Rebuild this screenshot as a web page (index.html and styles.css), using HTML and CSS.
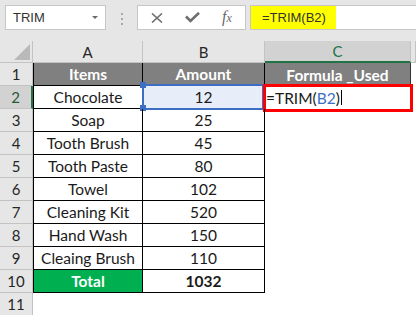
FILE: index.html
```html
<!DOCTYPE html>
<html lang="en">
<head>
    <meta charset="UTF-8" />
    <title>TRIM - Excel</title>
    <link rel="stylesheet" href="styles.css">
</head>
<body>
    <div class="toolbar">
        <div class="name-box"><span>TRIM</span><span class="caret"></span></div>
        <div class="grip"><i></i><i></i><i></i></div>
        <div class="fx-buttons">
            <svg width="12" height="10" viewBox="0 0 12 10"><path d="M1 0.5 L11 9.5 M11 0.5 L1 9.5" stroke="#6e6e6e" stroke-width="1.6" fill="none"/></svg>
            <svg width="15" height="11" viewBox="0 0 15 11"><path d="M1 4.5 L5.5 9 L14 0.8" stroke="#6e6e6e" stroke-width="2.6" fill="none"/></svg>
            <span class="fx">f<small>x</small></span>
        </div>
        <div class="formula-bar"><span class="formula-hl">=TRIM(B2)</span></div>
    </div>

    <div class="sheet">
        <div class="head corner"><svg width="16" height="16" viewBox="0 0 16 16"><path d="M16 0 L16 16 L0 16 Z" fill="#b9b9b9"/></svg></div>
        <div class="head">A</div>
        <div class="head">B</div>
        <div class="head active-col">C</div>
        <div class="head"></div>

        <div class="head">1</div>
        <div class="cell t first hdr">Items</div>
        <div class="cell t hdr">Amount</div>
        <div class="cell hdr c1">Formula _Used</div>
        <div class="cell"></div>

        <div class="head active-row">2</div>
        <div class="cell t first">Chocolate</div>
        <div class="cell t ref">12
            <span class="ref-box"></span>
            <span class="handle top"></span>
            <span class="handle bottom"></span>
        </div>
        <div class="cell edit">=TRIM(<span class="ref-text">B2</span>)<span class="cursor"></span>
            <span class="mark"></span>
        </div>
        <div class="cell"></div>

        <div class="head">3</div>
        <div class="cell t first">Soap</div>
        <div class="cell t">25</div>
        <div class="cell"></div>
        <div class="cell"></div>

        <div class="head">4</div>
        <div class="cell t first">Tooth Brush</div>
        <div class="cell t">45</div>
        <div class="cell"></div>
        <div class="cell"></div>

        <div class="head">5</div>
        <div class="cell t first">Tooth Paste</div>
        <div class="cell t">80</div>
        <div class="cell"></div>
        <div class="cell"></div>

        <div class="head">6</div>
        <div class="cell t first">Towel</div>
        <div class="cell t">102</div>
        <div class="cell"></div>
        <div class="cell"></div>

        <div class="head">7</div>
        <div class="cell t first">Cleaning Kit</div>
        <div class="cell t">520</div>
        <div class="cell"></div>
        <div class="cell"></div>

        <div class="head">8</div>
        <div class="cell t first">Hand Wash</div>
        <div class="cell t">150</div>
        <div class="cell"></div>
        <div class="cell"></div>

        <div class="head">9</div>
        <div class="cell t first">Cleaing Brush</div>
        <div class="cell t">110</div>
        <div class="cell"></div>
        <div class="cell"></div>

        <div class="head">10</div>
        <div class="cell t first total">Total</div>
        <div class="cell t bold">1032</div>
        <div class="cell"></div>
        <div class="cell"></div>

        <div class="head">11</div>
        <div class="cell"></div>
        <div class="cell"></div>
        <div class="cell"></div>
        <div class="cell"></div>
    </div>
</body>
</html>
```

FILE: styles.css
```css
body {
    margin: 0;
    background: #fff;
    font-family: "Lato", "Liberation Sans", sans-serif;
    color: #1a1a1a;
    overflow: hidden;
}

/* formula bar */
.toolbar {
    display: flex;
    align-items: flex-start;
    height: 41px;
    padding: 5px 0 0 5px;
    box-sizing: border-box;
    background: #e6e6e6;
}
.name-box {
    width: 101px;
    height: 25px;
    box-sizing: border-box;
    background: #fff;
    border: 1px solid #c6c6c6;
    display: flex;
    align-items: center;
    justify-content: space-between;
    padding: 0 7px;
    font: 13px "Liberation Sans", sans-serif;
    color: #333;
}
.caret {
    border-left: 3px solid transparent;
    border-right: 3px solid transparent;
    border-top: 3px solid #6a6a6a;
}
.grip {
    margin: 8px 0 0 15px;
    display: flex;
    flex-direction: column;
    gap: 3px;
}
.grip i {
    width: 2px;
    height: 2px;
    background: #a8a8a8;
}
.fx-buttons {
    margin-left: 14px;
    width: 109px;
    height: 25px;
    box-sizing: border-box;
    background: #fff;
    border: 1px solid #c6c6c6;
    display: flex;
    align-items: center;
    padding-left: 13px;
    gap: 22px;
}
.fx {
    font: italic 16px "Liberation Serif", serif;
    color: #6a6a6a;
    margin-top: -2px;
}
.fx small {
    font-size: 12px;
}
.formula-bar {
    margin-left: 4px;
    flex: 1;
    height: 25px;
    box-sizing: border-box;
    background: #fff;
    border: 1px solid #c6c6c6;
    border-right: none;
    display: flex;
}
.formula-hl {
    display: flex;
    align-items: center;
    background: #ffff00;
    padding: 0 10px 0 11px;
    font: 13px "Liberation Sans", sans-serif;
    color: #333;
}

/* grid */
.sheet {
    display: grid;
    grid-template-columns: 33px 110px 122px 146px 1fr;
    grid-template-rows: 22px;
    grid-auto-rows: 23px;
}
.head {
    box-sizing: border-box;
    background: #e6e6e6;
    border-right: 1px solid #c3c3c3;
    border-bottom: 1px solid #c3c3c3;
    display: flex;
    align-items: center;
    justify-content: center;
    font-size: 15px;
    color: #262626;
}
.corner {
    justify-content: flex-end;
    align-items: flex-end;
    padding: 0 2px 2px 0;
}
.active-col {
    background: #d2d2d2;
    border-bottom: 2px solid #217346;
    color: #217346;
}
.active-row {
    background: #d2d2d2;
    border-right: 2px solid #217346;
    color: #1d5c39;
}
.cell {
    box-sizing: border-box;
    display: flex;
    align-items: center;
    justify-content: center;
    font-size: 15.5px;
    position: relative;
}
.t {
    border-right: 1px solid #000;
    border-bottom: 1px solid #000;
}
.first {
    border-left: 1px solid #000;
}
.hdr {
    background: #808080;
    color: #fff;
    font-weight: bold;
}
.c1 {
    border-right: 1px solid #333;
}
.total {
    background: #00b050;
    color: #fff;
    font-weight: bold;
}
.bold {
    font-weight: bold;
}

/* reference highlight on B2 */
.ref {
    background: #e7eef9;
}
.ref-box {
    position: absolute;
    left: -1px;
    top: -2px;
    right: 0;
    bottom: -2px;
    border: 2px solid #3c6fc4;
}
.handle {
    position: absolute;
    left: -3px;
    width: 6px;
    height: 6px;
    background: #3c6fc4;
}
.handle.top { top: -4px; }
.handle.bottom { bottom: -3px; }

/* edited cell C2 */
.edit {
    justify-content: flex-start;
    padding-left: 1px;
}
.ref-text {
    color: #3c6fc4;
}
.cursor {
    width: 1px;
    height: 15px;
    background: #000;
    margin-left: 1px;
}
.mark {
    position: absolute;
    left: -2px;
    top: -2px;
    right: -2px;
    bottom: -3px;
    border: 3px solid #ff0000;
}
```
